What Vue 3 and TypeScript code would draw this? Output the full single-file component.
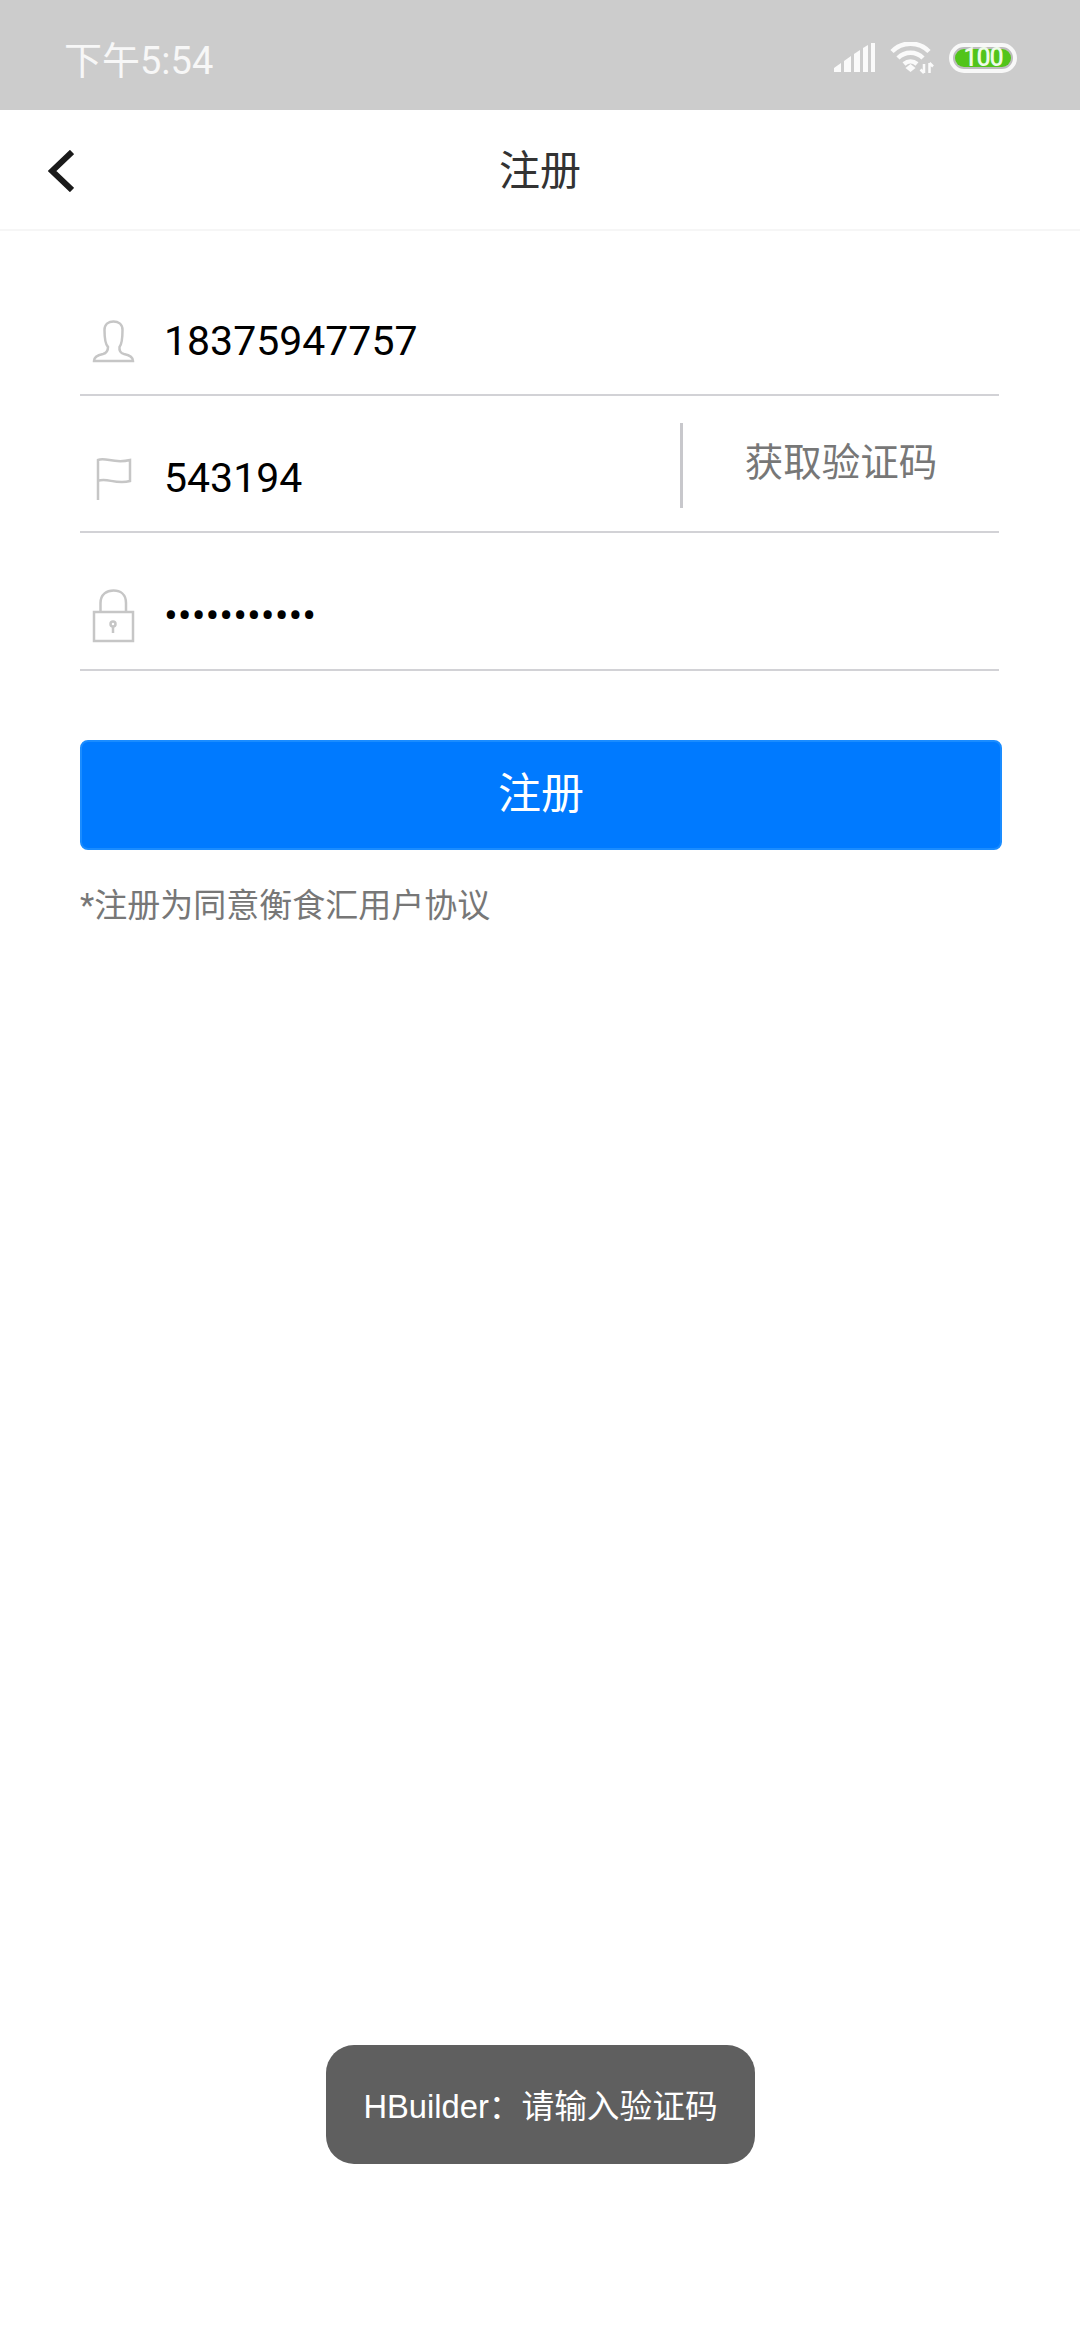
<script setup lang="ts">
const phone = "18375947757";
const code = "543194";
const password = "•••••••••••";
// signal bars have a sloped top, so each one is a polygon
const signalBars = [
  "0,29 0,25 7,20 7,29",
  "10,29 10,18 17,13 17,29",
  "20,29 20,11 26,7 26,29",
  "29,29 29,5 34,2 34,29",
  "37,29 37,0 41,0 41,29",
];
</script>

<template>
  <div class="page">
    <div class="status-bar">
      <span class="time">下午5:54</span>
      <div class="status-icons">
        <svg class="signal" width="41" height="30" viewBox="0 0 41 30" fill="#fafafa">
          <polygon v-for="bar in signalBars" :key="bar" :points="bar" />
        </svg>
        <svg class="wifi" width="44" height="32" viewBox="0 0 44 32" fill="none" stroke="#fafafa" stroke-width="4.500">
          <path d="M2 9.500C12 -1 29 -1 39 9.500" />
          <path d="M8 16C15 9 26 9 33 16" />
          <path d="M14 22C18 18.500 23 18.500 27 22" />
          <path d="M15.500 26L20.500 22 25.500 26 20.500 30Z" fill="#fafafa" stroke="none" />
          <path d="M34 22V31M34 31L30.500 27.500M39.500 21V31M39.500 21L43 24.500" stroke-width="2.500" />
        </svg>
        <div class="battery"><span class="battery-level">100</span></div>
      </div>
    </div>

    <header class="nav">
      <svg class="back" width="26" height="42" viewBox="0 0 26 42" fill="none" stroke="#1a1a1a" stroke-width="6">
        <path d="M24 2L4 21 24 40" />
      </svg>
      <h1 class="title">注册</h1>
    </header>

    <form class="form" @submit.prevent>
      <div class="row">
        <div class="icon">
          <svg width="44" height="43" viewBox="0 0 44 43" fill="none" stroke="#c6c6c6" stroke-width="2.500">
            <path d="M2 41C2 37 6 35 11 34C15 33 16 31 16 27C13 24 12.500 19 12.500 10C12.500 4 17 1.500 21.500 1.500C26 1.500 30.500 4 30.500 10C30.500 19 30 24 27.500 27C27 31 28 33 32 34C37 35 41 37 41 41Z" />
          </svg>
        </div>
        <span class="value">{{ phone }}</span>
      </div>

      <div class="row">
        <div class="icon">
          <svg width="44" height="44" viewBox="0 0 44 44" fill="none" stroke="#c6c6c6" stroke-width="2.500">
            <path d="M6 43V3C14 0 22 7 38 3V24C24 28 14 20 6 24" />
          </svg>
        </div>
        <span class="value">{{ code }}</span>
        <button class="get-code" type="button">获取验证码</button>
      </div>

      <div class="row">
        <div class="icon">
          <svg width="44" height="54" viewBox="0 0 44 54" fill="none" stroke="#c6c6c6" stroke-width="2.500">
            <path d="M8.500 23V14C8.500 5 15 1.500 21.500 1.500C28 1.500 34 5 34 14V23" />
            <rect x="2" y="23" width="39" height="29" />
            <circle cx="21" cy="35" r="2.500" />
            <path d="M21 37.500V44" />
          </svg>
        </div>
        <span class="value">{{ password }}</span>
      </div>

      <button class="submit" type="submit">注册</button>
      <p class="agreement">*注册为同意衡食汇用户协议</p>
    </form>

    <div class="toast">HBuilder：请输入验证码</div>
  </div>
</template>

<style scoped>
.page {
  position: relative;
  width: 1080px;
  height: 2340px;
  overflow: hidden;
  background: #fff;
  font-family: Roboto, "Noto Sans CJK SC", sans-serif;
}

.status-bar {
  height: 110px;
  background: #cccccc;
  display: flex;
  align-items: center;
  justify-content: space-between;
  padding: 0 63px 0 64px;
  box-sizing: border-box;
}

.time {
  font-size: 38px;
  color: #f7f7f7;
  margin-top: 4px;
}

.status-icons {
  display: flex;
  align-items: center;
  gap: 13px;
  margin-top: 6px;
}

.signal {
  margin-right: 2px;
}

.battery {
  width: 68px;
  height: 30px;
  margin-left: 2px;
  box-sizing: border-box;
  border: 4px solid #f8f8f8;
  border-radius: 15px;
  padding: 2px;
  background: #bdbdbd;
  display: flex;
}

.battery-level {
  flex: 1;
  background: #52c41a;
  border-radius: 9px;
  color: #eefbe8;
  font-size: 25px;
  font-weight: 500;
  line-height: 18px;
  text-align: center;
  letter-spacing: -1px;
}

.nav {
  height: 121px;
  box-sizing: border-box;
  border-bottom: 2px solid #f6f6f6;
  display: grid;
  grid-template-columns: 1fr auto 1fr;
  align-items: center;
}

.back {
  margin: 3px 0 0 48px;
}

.title {
  grid-column: 2;
  margin: 0 0 6px;
  font-size: 41px;
  font-weight: 400;
  color: #333;
}

.form {
  display: flex;
  flex-direction: column;
  padding: 27px 81px 0 80px;
}

.row {
  height: 137.5px;
  box-sizing: border-box;
  padding-top: 28px;
  border-bottom: 2px solid #d2d2d6;
  display: flex;
  align-items: center;
}

.icon {
  width: 84px;
  flex-shrink: 0;
  padding: 3px 0 0 12px;
  box-sizing: border-box;
  display: flex;
}

.value {
  flex: 1;
  font-size: 41px;
  color: #000;
  padding-top: 2px;
}

.get-code {
  width: 319px;
  height: 85px;
  margin-bottom: 24px;
  padding: 0 0 12px;
  border: 0;
  border-left: 3px solid #c8c8cc;
  background: none;
  font-family: inherit;
  font-size: 38.500px;
  color: #777;
}

.submit {
  height: 110px;
  width: 922px;
  margin-top: 69px;
  padding: 0 0 9px;
  border: 2px solid #1a8cff;
  border-radius: 8px;
  background: #007aff;
  color: #fff;
  font-family: inherit;
  font-size: 43px;
}

.agreement {
  margin: 29px 0 0;
  font-size: 33px;
  color: #777;
}

.toast {
  position: absolute;
  left: 326px;
  top: 2045px;
  width: 429px;
  height: 119px;
  padding-bottom: 3px;
  box-sizing: border-box;
  border-radius: 28px;
  background: #5f5f5f;
  color: #fff;
  font-size: 32.700px;
  font-family: "Liberation Sans", "Noto Sans CJK SC", sans-serif;
  display: flex;
  align-items: center;
  justify-content: center;
}
</style>
